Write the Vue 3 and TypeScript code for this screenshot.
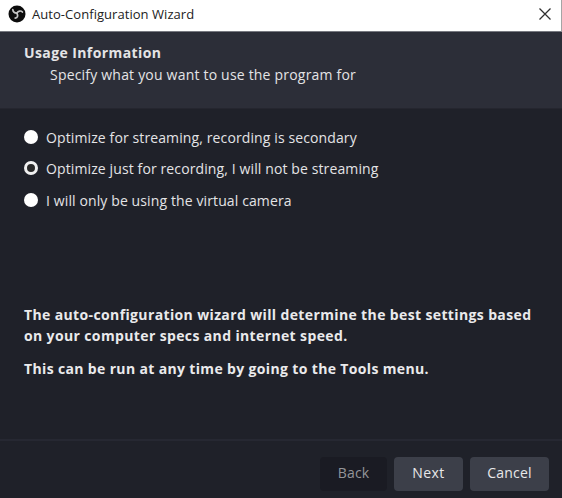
<script setup lang="ts">
import { ref } from 'vue'

const options: { id: string; label: string }[] = [
  { id: 'stream', label: 'Optimize for streaming, recording is secondary' },
  { id: 'record', label: 'Optimize just for recording, I will not be streaming' },
  { id: 'camera', label: 'I will only be using the virtual camera' },
]
const selected = ref('record')
</script>

<template>
  <main class="window">
    <header class="titlebar">
      <svg class="logo" viewBox="0 0 18 18" aria-hidden="true">
        <circle cx="9" cy="9" r="8.5" fill="#0c0c0c" />
        <g fill="none" stroke="#c4c4c4" stroke-width="1.7" stroke-linecap="round">
          <path d="M4.8 4.6C5 6.8 6.5 7.9 8.8 8.2" />
          <path d="M8.8 8.2C10.2 6 12.8 5.2 14.4 7" />
          <path d="M8.8 8.2C10.4 10.6 9.6 12.8 7.2 13.2" />
        </g>
      </svg>
      <span class="title">Auto-Configuration Wizard</span>
      <svg class="close" viewBox="0 0 12 12" aria-label="Close">
        <path d="M.5.5 11.5 11.5M11.5.5.5 11.5" stroke="#303030" stroke-width="1.25" />
      </svg>
    </header>
    <section class="heading">
      <h1>Usage Information</h1>
      <p>Specify what you want to use the program for</p>
    </section>
    <section class="content">
      <div class="options" role="radiogroup">
        <div
          v-for="option in options"
          :key="option.id"
          class="option"
          role="radio"
          :aria-checked="selected === option.id"
          @click="selected = option.id"
        >
          <span class="dot" :class="{ checked: selected === option.id }"></span>
          <span class="label">{{ option.label }}</span>
        </div>
      </div>
      <div class="notes">
        <p>The auto-configuration wizard will determine the best settings based<br />on your computer specs and internet speed.</p>
        <p>This can be run at any time by going to the Tools menu.</p>
      </div>
    </section>
    <footer class="actions">
      <button class="back" disabled>Back</button>
      <button class="next">Next</button>
      <button class="cancel">Cancel</button>
    </footer>
  </main>
</template>

<style>
body {
  margin: 0;
  background: #1f2129;
}
</style>

<style scoped>
.window {
  box-sizing: border-box;
  width: 562px;
  height: 498px;
  display: flex;
  flex-direction: column;
  overflow: hidden;
  background: #1f2129;
  color: #e4e4e6;
  font: 14px/20px 'Open Sans', 'Noto Sans', sans-serif;
  white-space: nowrap;
}
.titlebar {
  box-sizing: border-box;
  height: 32px;
  display: flex;
  align-items: center;
  padding: 0 10px 4px 8px;
  background: #fff;
  border-right: 1px solid #a5a5a5;
  border-bottom: 1px solid #777980;
  color: #222;
}
.logo {
  width: 18px;
  height: 18px;
  margin-right: 6px;
}
.title {
  font-size: 13px;
  letter-spacing: 0.05px;
}
.close {
  width: 12px;
  height: 12px;
  margin-left: auto;
}
.heading {
  box-sizing: border-box;
  height: 77px;
  padding: 10px 24px 0;
  background: #2c2e38;
  border-bottom: 1px solid #25262f;
}
h1,
p {
  margin: 0;
}
h1 {
  font-size: 14px;
  line-height: 22px;
  font-weight: 700;
  letter-spacing: 0.4px;
}
.heading p {
  padding-left: 26px;
  line-height: 22px;
  letter-spacing: 0.2px;
}
.content {
  flex: 1;
  padding: 13px 24px 0;
}
.option {
  height: 31.5px;
  display: flex;
  align-items: center;
}
.label {
  letter-spacing: 0.115px;
}
.dot {
  box-sizing: border-box;
  width: 14px;
  height: 14px;
  margin: 0 8px 2px 0;
  border-radius: 50%;
  background: #fff;
}
.dot.checked {
  border: 3px solid #f0f0f0;
  background: #292929;
}
.notes {
  margin-top: 87.5px;
  color: #eaeaec;
  font-weight: 700;
  line-height: 21px;
  letter-spacing: 0.37px;
}
.notes p + p {
  margin-top: 12px;
  letter-spacing: 0.35px;
}
.actions {
  box-sizing: border-box;
  height: 59px;
  display: flex;
  justify-content: flex-end;
  gap: 7px;
  padding: 16px 13px 0;
  border-top: 2px solid #262832;
}
button {
  height: 34px;
  padding: 0 0 2px;
  border: 0;
  border-radius: 4px;
  background: #3c3f49;
  color: #e8e8ea;
  font: inherit;
  letter-spacing: 0.2px;
}
.back {
  width: 67px;
  background: #1a1b23;
  color: #94959a;
}
.next {
  width: 69px;
  letter-spacing: 0.5px;
}
.cancel {
  width: 79px;
}
</style>
